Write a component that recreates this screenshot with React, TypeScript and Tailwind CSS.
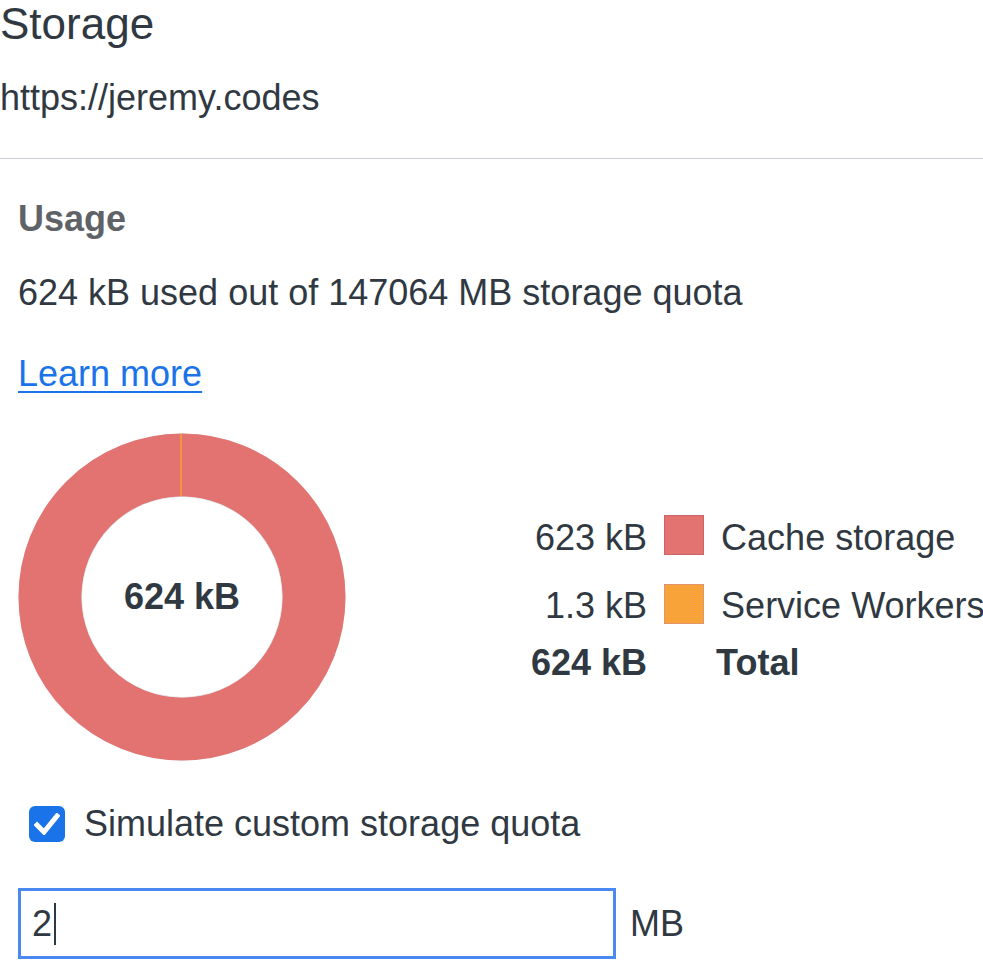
import React from 'react';

const font = { fontFamily: '"Liberation Sans", Arial, sans-serif' };

function UsageDonut() {
	// ring: outer r=164, inner r=100 -> stroke 64 at r=132
	return (
		<div className="relative w-[328px] h-[328px] shrink-0">
			<svg width="328" height="328" viewBox="0 0 328 328" className="block">
				<circle cx="164" cy="164" r="163.5" fill="#d9dadc" />
				<circle cx="164" cy="164" r="132" fill="none" stroke="#e37371" strokeWidth="63" />
				<circle cx="164" cy="164" r="100.5" fill="#d9dadc" />
				<circle cx="164" cy="164" r="100" fill="#ffffff" />
				<line x1="163" y1="1" x2="163" y2="63" stroke="#f7a13a" strokeWidth="1.5" />
			</svg>
			<div className="absolute inset-0 flex items-center justify-center text-[36px] font-bold text-[#303942]">
				624 kB
			</div>
		</div>
	);
}

export default function App() {
	return (
		<div className="w-[983px] h-[960px] overflow-hidden bg-white text-[#303942]" style={font}>
			<div className="pt-[2px] text-[44px] leading-[44px]">Storage</div>
			<div className="mt-[34px] text-[36px] leading-[36px]">https://jeremy.codes</div>
			<div className="mt-[42px] h-px bg-[#cacdd1]" />
			<div className="pl-[18px]">
				<div className="mt-[42px] text-[36px] leading-[36px] font-bold text-[#5f6368]">Usage</div>
				<div className="mt-[38px] text-[36px] leading-[36px]">
					624 kB used out of 147064 MB storage quota
				</div>
				<div className="mt-[45px] text-[36px] leading-[36px]">
					<a
						href="#"
						className="text-[#1a73e8] underline decoration-2 underline-offset-[5px]"
					>
						Learn more
					</a>
				</div>
				<div className="mt-[41px] flex items-center">
					<UsageDonut />
					<div className="ml-[185px] grid grid-cols-[auto_40px_auto] gap-x-[17px] items-center text-[36px] leading-[40px] whitespace-nowrap">
						<div className="text-right pt-[6px]">623 kB</div>
						<div className="w-[40px] h-[40px] bg-[#e37371] border border-[#cc6462]" />
						<div className="pt-[6px]">Cache storage</div>
						<div className="mt-[24px] pt-[4px] text-right">1.3 kB</div>
						<div className="mt-[24px] w-[40px] h-[40px] bg-[#f7a33a] border border-dotted border-[#c98aa0]" />
						<div className="mt-[24px] pt-[4px]">Service Workers</div>
						<div className="mt-[17px] text-right font-bold">624 kB</div>
						<div className="mt-[17px]" />
						<div className="mt-[17px] -ml-[5px] font-bold">Total</div>
					</div>
				</div>
				<label className="mt-[45px] ml-[11px] flex items-center gap-[19px] text-[36px] leading-[36px]">
					<span className="w-[36px] h-[36px] rounded-[6px] bg-[#1a73e8] flex items-center justify-center">
						<svg width="26" height="22" viewBox="0 0 26 22">
							<path
								d="M3 12 L10 19 L23 3"
								fill="none"
								stroke="#ffffff"
								strokeWidth="5"
								strokeLinecap="square"
							/>
						</svg>
					</span>
					<span>Simulate custom storage quota</span>
				</label>
				<div className="mt-[46px] flex items-center gap-[14px]">
					<div className="w-[598px] h-[71px] border-[3px] border-[#4a8af0] flex items-center pl-[11px] text-[36px] leading-[36px]">
						<span>2</span>
						<span className="ml-[2px] w-[2px] h-[42px] bg-[#303942]" />
					</div>
					<span className="text-[36px] leading-[36px]">MB</span>
				</div>
			</div>
		</div>
	);
}
